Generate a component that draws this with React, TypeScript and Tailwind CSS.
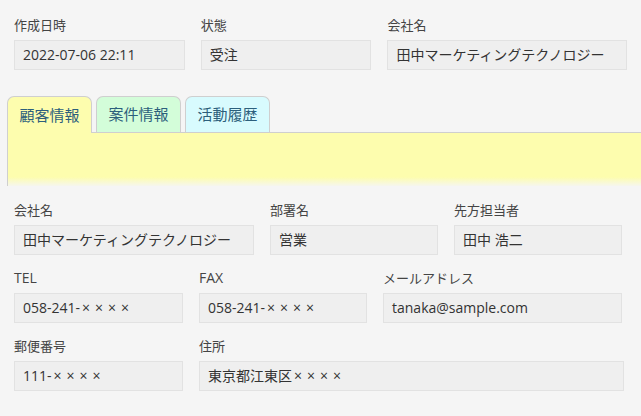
import React from 'react'

const font = { fontFamily: '"Open Sans", "Noto Sans CJK JP", sans-serif' }

// renders full-width looking × marks like the reference
function Masked({ text }: { text: string }) {
  const i = text.indexOf('×')
  if (i < 0) return <>{text}</>
  return (
    <>
      {text.slice(0, i)}
      <span className="ml-[2px] tracking-[5px]">{text.slice(i)}</span>
    </>
  )
}

function Field({ label, value, width }: { label: string; value: string; width: string }) {
  const latin = /^[A-Z]+$/.test(label)
  return (
    <div className={`flex flex-col ${width}`}>
      <div className={`h-[20px] leading-[20px] text-[#444] ${latin ? 'text-[14px]' : 'text-[13px]'}`}>{label}</div>
      <div className="mt-[5px] h-[30px] border border-[#e2e2e2] bg-[#efefef] px-[8px] text-[14px] leading-[28px] text-[#333] whitespace-nowrap overflow-hidden">
        <Masked text={value} />
      </div>
    </div>
  )
}

export default function App() {
  return (
    <div className="min-h-[416px] w-[641px] overflow-hidden bg-[#f5f5f5]" style={font}>
      <div className="flex gap-[16px] px-[14px] pt-[15px]">
        <Field label="作成日時" value="2022-07-06 22:11" width="w-[171px]" />
        <Field label="状態" value="受注" width="w-[171px]" />
        <Field label="会社名" value="田中マーケティングテクノロジー" width="w-[240px]" />
      </div>

      <div className="mt-[26px] pl-[7px]">
        <div className="flex gap-[4px]">
          <div className="relative z-10 -mb-px flex h-[37px] w-[85px] items-center justify-center rounded-t-[7px] border border-b-0 border-[#cfcfcf] bg-[#fdfdae] text-[15px] text-[#2c5f7c]">
            顧客情報
          </div>
          <div className="flex h-[36px] w-[85px] items-center justify-center rounded-t-[7px] border border-b-0 border-[#cfcfcf] bg-[#d3fdd9] text-[15px] text-[#2c5f7c]">
            案件情報
          </div>
          <div className="flex h-[36px] w-[85px] items-center justify-center rounded-t-[7px] border border-b-0 border-[#cfcfcf] bg-[#d8fbfe] text-[15px] text-[#2c5f7c]">
            活動履歴
          </div>
        </div>
        <div className="h-[54px] border-l border-t border-[#cfcfcf] bg-[linear-gradient(to_bottom,#fdfdae_0px,#fdfdae_44px,#f5f5f5_54px)]" />
      </div>

      <div className="flex flex-col gap-[13px] px-[14px] pt-[14px]">
        <div className="flex gap-[16px]">
          <Field label="会社名" value="田中マーケティングテクノロジー" width="w-[240px]" />
          <Field label="部署名" value="営業" width="w-[168px]" />
          <Field label="先方担当者" value="田中 浩二" width="w-[168px]" />
        </div>
        <div className="flex gap-[16px]">
          <Field label="TEL" value="058-241-××××" width="w-[169px]" />
          <Field label="FAX" value="058-241-××××" width="w-[168px]" />
          <Field label="メールアドレス" value="tanaka@sample.com" width="w-[239px]" />
        </div>
        <div className="flex gap-[16px]">
          <Field label="郵便番号" value="111-××××" width="w-[169px]" />
          <Field label="住所" value="東京都江東区××××" width="w-[425px]" />
        </div>
      </div>
    </div>
  )
}
